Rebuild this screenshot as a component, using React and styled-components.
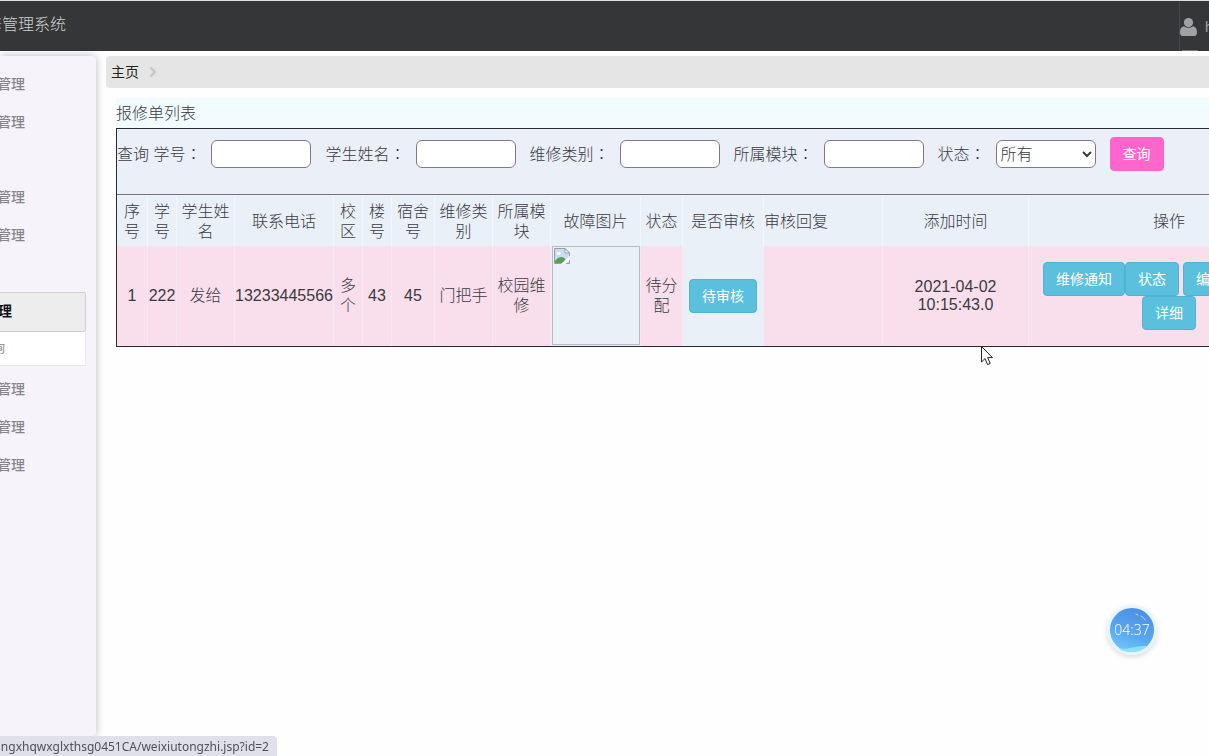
import React, { useState } from 'react'
import styled, { createGlobalStyle } from 'styled-components'

const GlobalStyle = createGlobalStyle`
  * {
    box-sizing: border-box;
  }

  body {
    margin: 0;
    background: #fefefe;
    color: #3a3a42;
    font-family: 'Liberation Sans', 'Noto Sans CJK SC', sans-serif;
    font-size: 16px;
    font-weight: 300;
    overflow: hidden;
  }
`

const Page = styled.div`
  display: flex;
  flex-direction: column;
  height: 100vh;
  overflow: hidden;
`

const Header = styled.header`
  display: flex;
  justify-content: space-between;
  flex-shrink: 0;
  height: 51px;
  border-top: 1px solid #dbe0e0;
  background: #353638;
`

const Brand = styled.div`
  display: flex;
  justify-content: flex-end;
  width: 66px;
  overflow: hidden;
  color: #cfcfd1;
  line-height: 48px;
  white-space: nowrap;
`

const UserLink = styled.a`
  display: flex;
  align-items: center;
  gap: 8px;
  width: 30px;
  padding-top: 2px;
  border-left: 1px solid #47484d;
  overflow: hidden;
  background: linear-gradient(#77777b, #77777b) 2px 100% / 16px 1px no-repeat;
  color: #a2a2a6;
  font-size: 14px;
  text-decoration: none;

  svg {
    flex-shrink: 0;
    fill: #a2a2a6;
  }
`

const Body = styled.div`
  display: flex;
  flex: 1;
  gap: 10px;
  min-height: 0;
  padding-top: 5px;
`

const Sidebar = styled.nav`
  flex-shrink: 0;
  width: 96px;
  margin-bottom: 20px;
  padding-top: 9px;
  border-radius: 0 4px 4px 0;
  background: #f6f3fa;
  box-shadow: 0 0 8px rgba(0, 0, 0, 0.28);
`

const MenuItem = styled.a`
  display: flex;
  justify-content: flex-end;
  width: 25px;
  height: 38px;
  margin-top: ${(props) => (props.$spaced ? '37px' : '0')};
  overflow: hidden;
  color: #88868c;
  font-size: 14px;
  font-weight: 500;
  line-height: 38px;
  text-decoration: none;
  white-space: nowrap;
`

const MenuGroup = styled.div`
  width: 86px;
  margin: 38px 0 4px;
`

const GroupTitle = styled.a`
  display: flex;
  justify-content: flex-end;
  height: 40px;
  padding-right: 73px;
  border: 1px solid #cfcfd2;
  border-left: none;
  border-radius: 0 3px 3px 0;
  overflow: hidden;
  background: #ededee;
  color: #111;
  font-size: 14px;
  font-weight: bold;
  line-height: 36px;
  text-decoration: none;
  white-space: nowrap;
`

const SubItem = styled.a`
  display: flex;
  justify-content: flex-end;
  height: 34px;
  padding-right: 80px;
  border-right: 1px solid #ececf2;
  border-bottom: 1px solid #e6e6ec;
  overflow: hidden;
  background: #fff;
  color: #88868c;
  font-size: 12px;
  font-weight: 400;
  line-height: 34px;
  text-decoration: none;
  white-space: nowrap;
`

const Main = styled.main`
  flex: 1;
  min-width: 0;
  overflow: hidden;
`

const Breadcrumb = styled.div`
  display: flex;
  align-items: center;
  gap: 10px;
  height: 32px;
  padding-left: 5px;
  border-radius: 4px 0 0 4px;
  background: #e5e5e6;
  font-size: 14px;
  font-weight: 400;

  a {
    padding-bottom: 2px;
    color: #222;
    text-decoration: none;
  }
`

const Content = styled.section`
  padding: 10px 0 0 10px;
`

const ListTitle = styled.div`
  height: 30px;
  background: #f2fcff;
  line-height: 32px;
`

const Panel = styled.div`
  width: max-content;
  border: 1px solid #2a2a34;
  background: #ebeff8;
`

const SearchForm = styled.form`
  display: flex;
  align-items: flex-start;
  gap: 14px;
  height: 66px;
  padding-top: 8px;
  border-bottom: 1px solid #77727a;
`

const Field = styled.label`
  display: flex;
  align-items: center;
  gap: 10px;
  height: 34px;
  line-height: 32px;
`

// the JP face centres the full-width colon
const Colon = styled.span`
  font-family: 'Noto Sans CJK JP', sans-serif;
`

const TextInput = styled.input`
  width: 100px;
  height: 28px;
  padding: 0 5px;
  border: 1px solid #87767f;
  border-radius: 6px;
  outline: none;
  background: #fff;
  font-size: 16px;
`

const Select = styled.select`
  width: 100px;
  height: 28px;
  border: 1px solid #87767f;
  border-radius: 6px;
  background: #fff;
  color: #3a3a42;
  font-family: inherit;
  font-size: 16px;
  font-weight: inherit;
`

const Button = styled.button`
  height: 34px;
  padding: 0 12px;
  border: 1px solid ${(props) => (props.$pink ? '#f765cb' : '#4fb3d3')};
  border-radius: 4px;
  background: ${(props) => (props.$pink ? '#ff66cc' : '#5bc0de')};
  color: #fff;
  font-family: inherit;
  font-size: 14px;
  font-weight: 400;
  line-height: 30px;
  vertical-align: top;
  cursor: pointer;
`

const Table = styled.table`
  width: 1193px;
  border-collapse: separate;
  border-spacing: 0;
  table-layout: fixed;
`

const Th = styled.th`
  height: 51px;
  padding: 2px 0 0;
  border-right: 1px solid #f3f6fc;
  background: #eaf0f8;
  font-weight: inherit;
  line-height: 20px;
  text-align: ${(props) => props.$align || 'center'};
`

const Td = styled.td`
  height: 100px;
  padding: 0 0 1px;
  border-right: 1px solid #f6eaf4;
  background: ${(props) => (props.$plain ? '#eaf0f8' : '#f9deeb')};
  line-height: ${(props) => (props.$tight ? '18px' : '20px')};
  text-align: center;
`

const Photo = styled.div`
  width: 88px;
  height: 99px;
  margin: 0 auto;
  padding: 1px;
  border: 1px solid #b9bcc4;
  text-align: left;

  svg {
    display: block;
  }
`

const Actions = styled.div`
  display: flex;
  flex-wrap: wrap;
  justify-content: center;
  width: 252px;
  margin: 0 auto;
`

const ActionGroup = styled.div`
  display: flex;
  gap: ${(props) => (props.$gap ? '4px' : '0')};
`

const Timer = styled.div`
  position: fixed;
  right: 52px;
  bottom: 101px;
  display: flex;
  justify-content: center;
  align-items: center;
  width: 50px;
  height: 50px;
  padding-bottom: 2px;
  border: 3px solid #e4f6ff;
  border-radius: 50%;
  background: linear-gradient(200deg, #4c8ee6 10%, #5aa8f0 60%, #70c6fa 90%);
  box-shadow: 0 2px 5px rgba(0, 0, 0, 0.15);
  color: #fff;
  font-family: 'Noto Sans', sans-serif;
  font-size: 14px;
`

const TimerWave = styled.svg`
  position: absolute;
  inset: 0;
`

const StatusBar = styled.div`
  position: fixed;
  left: 0;
  bottom: 0;
  display: flex;
  justify-content: flex-end;
  width: 277px;
  height: 20px;
  padding-right: 8px;
  border-radius: 0 4px 0 0;
  overflow: hidden;
  background: #dfe0e8;
  color: #505058;
  font-family: 'Noto Sans', sans-serif;
  font-size: 12px;
  font-weight: 400;
  line-height: 22px;
  white-space: nowrap;
`

const Pointer = styled.svg`
  position: fixed;
  left: 981px;
  top: 346px;
`

const columns = [
  { title: '序号', width: 31 },
  { title: '学号', width: 29 },
  { title: '学生姓名', width: 58 },
  { title: '联系电话', width: 99 },
  { title: '校区', width: 29 },
  { title: '楼号', width: 29 },
  { title: '宿舍号', width: 43 },
  { title: '维修类别', width: 58 },
  { title: '所属模块', width: 58 },
  { title: '故障图片', width: 90 },
  { title: '状态', width: 42 },
  { title: '是否审核', width: 81 },
  { title: '审核回复', width: 119, align: 'left' },
  { title: '添加时间', width: 146 },
  { title: '操作', width: 281 },
]

const orders = [
  {
    id: 1,
    student: '222',
    name: '发给',
    phone: '13233445566',
    campus: '多个',
    building: '43',
    room: '45',
    type: '门把手',
    area: '校园维修',
    status: '待分配',
    audit: '待审核',
    reply: '',
    date: '2021-04-02',
    time: '10:15:43.0',
  },
]

const filters = ['学号', '学生姓名', '维修类别', '所属模块']

const UserIcon = () => (
  <svg width="17" height="18" viewBox="0 0 17 18">
    <circle cx="8.5" cy="4.6" r="4.6" />
    <path d="M4.2 8.2C1.2 8.6 0 11.4 0 14.4C0 16.8 1.3 18 3.3 18H13.7C15.7 18 17 16.8 17 14.4C17 11.4 15.8 8.6 12.8 8.2C11.6 9.3 10.2 9.8 8.5 9.8C6.8 9.8 5.4 9.3 4.2 8.2Z" />
  </svg>
)

const ChevronIcon = () => (
  <svg width="8" height="12" viewBox="0 0 8 12">
    <path d="M1.5 1.5L6 6L1.5 10.5" fill="none" stroke="#c6c6c8" strokeWidth="2.4" />
  </svg>
)

const BrokenImageIcon = () => (
  <svg width="16" height="16" viewBox="0 0 16 16">
    <path d="M0.5 0.5H11L15.5 5V15.5H0.5Z" fill="#c9dcf6" stroke="#9a9da2" />
    <path d="M11 0.5V5H15.5Z" fill="#fff" stroke="#9a9da2" />
    <ellipse cx="5" cy="5.4" rx="2.4" ry="1.4" fill="#fff" />
    <path d="M1 15V13C3 10.5 5 9 7 9C9 9 10.5 10 12 12V15Z" fill="#55a04b" />
    <path d="M7 16L16 7.5V11.5L11.5 16Z" fill="#fff" />
  </svg>
)

const Search = () => {
  const [values, setValues] = useState({})
  const [status, setStatus] = useState('所有')

  return (
    <SearchForm onSubmit={(e) => e.preventDefault()}>
      {filters.map((name, i) => (
        <Field key={name}>
          <span>
            {i === 0 && '查询 '}
            {name}
            <Colon>：</Colon>
          </span>
          <TextInput
            value={values[name] || ''}
            onChange={(e) => setValues({ ...values, [name]: e.target.value })}
          />
        </Field>
      ))}
      <Field>
        <span>
          状态<Colon>：</Colon>
        </span>
        <Select value={status} onChange={(e) => setStatus(e.target.value)}>
          <option>所有</option>
          <option>待分配</option>
        </Select>
      </Field>
      <Button $pink type="submit">
        查询
      </Button>
    </SearchForm>
  )
}

const OrderRow = ({ order }) => (
  <tr>
    <Td>{order.id}</Td>
    <Td>{order.student}</Td>
    <Td>{order.name}</Td>
    <Td>{order.phone}</Td>
    <Td>{order.campus}</Td>
    <Td>{order.building}</Td>
    <Td>{order.room}</Td>
    <Td>{order.type}</Td>
    <Td>{order.area}</Td>
    <Td $plain>
      <Photo role="img" aria-label="故障图片">
        <BrokenImageIcon />
      </Photo>
    </Td>
    <Td>{order.status}</Td>
    <Td $plain>
      <Button type="button">{order.audit}</Button>
    </Td>
    <Td>{order.reply}</Td>
    <Td $tight>
      {order.date}
      <br />
      {order.time}
    </Td>
    <Td>
      <Actions>
        <ActionGroup>
          <Button type="button">维修通知</Button>
          <ActionGroup $gap>
            <Button type="button">状态</Button>
            <Button type="button">编辑</Button>
            <Button type="button">删除</Button>
          </ActionGroup>
        </ActionGroup>
        <Button type="button">详细</Button>
      </Actions>
    </Td>
  </tr>
)

const OrderTable = () => (
  <Table>
    <colgroup>
      {columns.map((col) => (
        <col key={col.title} style={{ width: col.width }} />
      ))}
    </colgroup>
    <thead>
      <tr>
        {columns.map((col) => (
          <Th key={col.title} $align={col.align}>
            {col.title}
          </Th>
        ))}
      </tr>
    </thead>
    <tbody>
      {orders.map((order) => (
        <OrderRow key={order.id} order={order} />
      ))}
    </tbody>
  </Table>
)

const App = () => (
  <>
    <GlobalStyle />
    <Page>
      <Header>
        <Brand>修管理系统</Brand>
        <UserLink href="#user">
          <UserIcon />
          hsg
        </UserLink>
      </Header>
      <Body>
        <Sidebar>
          <MenuItem href="#m1">管理</MenuItem>
          <MenuItem href="#m2">管理</MenuItem>
          <MenuItem href="#m3" $spaced>
            管理
          </MenuItem>
          <MenuItem href="#m4">管理</MenuItem>
          <MenuGroup>
            <GroupTitle href="#m5">管理</GroupTitle>
            <SubItem href="#m6">查询</SubItem>
          </MenuGroup>
          <MenuItem href="#m7">管理</MenuItem>
          <MenuItem href="#m8">管理</MenuItem>
          <MenuItem href="#m9">管理</MenuItem>
        </Sidebar>
        <Main>
          <Breadcrumb>
            <a href="#home">主页</a>
            <ChevronIcon />
          </Breadcrumb>
          <Content>
            <ListTitle>报修单列表</ListTitle>
            <Panel>
              <Search />
              <OrderTable />
            </Panel>
          </Content>
        </Main>
      </Body>
    </Page>
    <Timer>
      <TimerWave width="44" height="44" viewBox="0 0 44 44">
        <path d="M8 40C16 43 24 37 37 38C32 43 27 44 22 44C16 44 12 43 8 40Z" fill="#8be0fb" />
        <path d="M26 6L28 7M31 8C33 9 34 10 35 12" fill="none" stroke="#b8dcfb" strokeLinecap="round" />
      </TimerWave>
      04:37
    </Timer>
    <StatusBar>ngxhqwxglxthsg0451CA/weixiutongzhi.jsp?id=2</StatusBar>
    <Pointer width="13" height="20" viewBox="0 0 13 20">
      <path
        d="M0.5 0.5V16L4 12.6L6.6 18.6L9.2 17.4L6.6 11.6H11.5Z"
        fill="#fff"
        stroke="#222"
      />
    </Pointer>
  </>
)

export default App
